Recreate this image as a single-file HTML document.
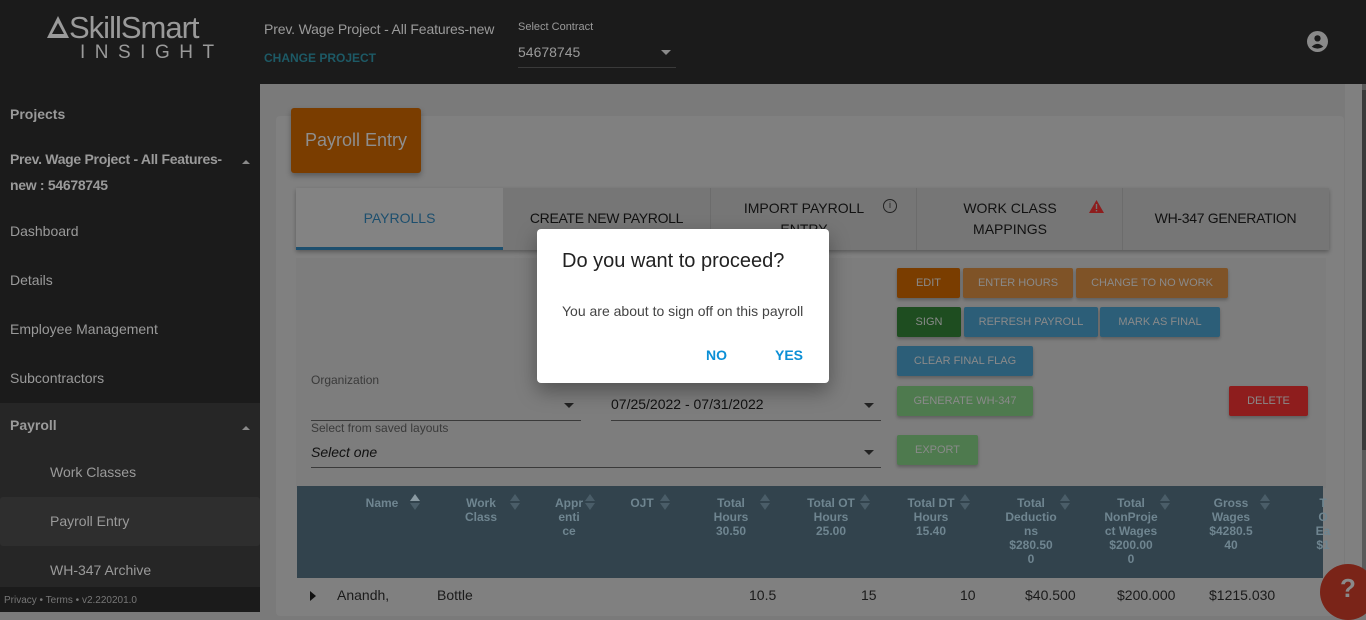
<!DOCTYPE html>
<html><head><meta charset="utf-8"><style>
*{box-sizing:border-box;margin:0;padding:0}
body{width:1366px;height:612px;overflow:hidden;background:#7a7a7a;font-family:"Liberation Sans",sans-serif;position:relative}
.top{position:absolute;left:0;top:0;width:1366px;height:84px;background:#1b1b1b}
.side{position:absolute;left:0;top:84px;width:260px;height:528px;background:#1b1b1b;color:#9a9a9a;font-size:14px}
.side div{position:absolute;left:10px}
.abs{position:absolute}
.btn{position:absolute;height:30px;border-radius:2px;font-size:11px;color:#8a8a8a;text-align:center;line-height:30px;box-shadow:0 2px 3px rgba(0,0,0,.25)}
.th{position:absolute;top:10px;color:#6f8590;font-size:12px;font-weight:bold;text-align:center;line-height:14px}
.td{position:absolute;top:587px;font-size:14px;color:#1a1a1a}
.sa{position:absolute;top:494px;width:10px;height:18px}
.sa:before{content:"";position:absolute;left:0;top:0;border-left:5px solid transparent;border-right:5px solid transparent;border-bottom:7px solid #4a5d68}
.sa:after{content:"";position:absolute;left:0;top:9px;border-left:5px solid transparent;border-right:5px solid transparent;border-top:7px solid #4a5d68}
.sa.on:before{border-bottom-color:#8a9aa2}
</style></head><body>
<div class="top">
  <svg class="abs" style="left:46px;top:15px" width="24" height="24" viewBox="0 0 24 24"><path d="M12 1 L23 23 H1 Z M12 8 L6 19 H18 Z" fill="#9a9a9a" fill-rule="evenodd"/></svg>
  <div class="abs" style="left:69px;top:10px;font-size:31px;color:#9a9a9a;letter-spacing:-1px">SkillSmart</div>
  <div class="abs" style="left:80px;top:42px;font-size:19px;color:#9a9a9a;letter-spacing:9.5px">INSIGHT</div>
  <div class="abs" style="left:264px;top:21px;font-size:14px;color:#9a9a9a;letter-spacing:-0.15px">Prev. Wage Project - All Features-new</div>
  <div class="abs" style="left:264px;top:51px;font-size:12px;color:#1d5a66;font-weight:bold">CHANGE PROJECT</div>
  <div class="abs" style="left:518px;top:21px;font-size:11px;color:#9a9a9a">Select Contract</div>
  <div class="abs" style="left:518px;top:44px;font-size:14px;color:#9a9a9a">54678745</div>
  <div class="abs" style="left:661px;top:50px;width:0;height:0;border-left:5px solid transparent;border-right:5px solid transparent;border-top:5px solid #8a8a8a"></div>
  <div class="abs" style="left:518px;top:67px;width:158px;height:1px;background:#3a3a3a"></div>
  <svg class="abs" style="left:1307px;top:31px" width="21" height="21" viewBox="0 0 20 20"><circle cx="10" cy="10" r="10" fill="#8a8a8a"/><circle cx="10" cy="7" r="3" fill="#1b1b1b"/><path d="M4.5 15 Q10 9.5 15.5 15 Q10 18.5 4.5 15Z" fill="#1b1b1b"/></svg>
</div>
<div class="side">
  <div style="top:22px;font-weight:bold">Projects</div>
  <div style="top:62px;font-weight:bold;line-height:26px;width:230px;letter-spacing:-0.3px">Prev. Wage Project - All Features-<br>new : 54678745</div>
  <div style="left:242px;top:76px;width:0;height:0;border-left:4px solid transparent;border-right:4px solid transparent;border-bottom:4px solid #8a8a8a"></div>
  <div style="top:139px">Dashboard</div>
  <div style="top:188px">Details</div>
  <div style="top:237px">Employee Management</div>
  <div style="top:286px">Subcontractors</div>
  <div style="left:0;top:319px;width:260px;height:196px;background:#262626"></div>
  <div style="top:333px;font-weight:bold">Payroll</div>
  <div style="left:242px;top:342px;width:0;height:0;border-left:4px solid transparent;border-right:4px solid transparent;border-bottom:4px solid #8a8a8a"></div>
  <div style="left:50px;top:380px">Work Classes</div>
  <div style="left:0;top:413px;width:260px;height:49px;background:#2e2e2e;border-radius:3px"></div>
  <div style="left:50px;top:429px">Payroll Entry</div>
  <div style="left:50px;top:478px">WH-347 Archive</div>
  <div style="left:0;top:503px;width:260px;height:25px;background:#1b1b1b"></div>
  <div style="left:4px;top:511px;font-size:10px;color:#777">Privacy • Terms • v2.220201.0</div>
</div>
<div class="abs" style="left:1345px;top:84px;width:17px;height:528px;background:#808080"></div>
<div class="abs" style="left:1362px;top:84px;width:4px;height:528px;background:#5a5a5a"></div>
<div class="abs" style="left:1362px;top:90px;width:4px;height:360px;background:#3a3a3a"></div>
<div class="abs" style="left:276px;top:116px;width:1068px;height:500px;background:#808080;border-radius:4px"></div>
<div class="abs" style="left:291px;top:108px;width:130px;height:65px;background:#7a3d00;border-radius:3px;color:#8e8e8e;font-size:18px;line-height:65px;text-align:center;box-shadow:0 3px 6px rgba(0,0,0,.3)">Payroll Entry</div>
<div class="abs" style="left:296px;top:188px;width:1033px;height:62px;background:#767676;box-shadow:0 2px 4px rgba(0,0,0,.3)"></div>
<div class="abs" style="left:296px;top:188px;width:207px;height:62px;background:#838383;border-bottom:3px solid #1d4f6e"></div>
<div class="abs" style="left:296px;top:210px;width:207px;text-align:center;font-size:14px;color:#1d4f6e">PAYROLLS</div>
<div class="abs" style="left:503px;top:210px;width:207px;text-align:center;font-size:14px;color:#111;letter-spacing:-0.3px">CREATE NEW PAYROLL</div>
<div class="abs" style="left:710px;top:188px;width:1px;height:62px;background:#6c6c6c"></div>
<div class="abs" style="left:720px;top:198px;width:168px;text-align:center;font-size:14px;color:#111;line-height:21px">IMPORT PAYROLL<br>ENTRY</div>
<div class="abs" style="left:883px;top:199px;width:14px;height:14px;border:1.3px solid #222;border-radius:50%;font-size:9px;text-align:center;line-height:11px;color:#222">i</div>
<div class="abs" style="left:916px;top:188px;width:1px;height:62px;background:#6c6c6c"></div>
<div class="abs" style="left:930px;top:198px;width:160px;text-align:center;font-size:14px;color:#111;line-height:21px">WORK CLASS<br>MAPPINGS</div>
<svg class="abs" style="left:1089px;top:200px" width="15" height="13" viewBox="0 0 15 13"><path d="M7.5 0 L15 13 H0Z" fill="#8e1d1d"/><rect x="6.8" y="4" width="1.4" height="5" fill="#767676"/><rect x="6.8" y="10" width="1.4" height="1.4" fill="#767676"/></svg>
<div class="abs" style="left:1122px;top:188px;width:1px;height:62px;background:#6c6c6c"></div>
<div class="abs" style="left:1122px;top:210px;width:207px;text-align:center;font-size:14px;color:#111;letter-spacing:-0.3px">WH-347 GENERATION</div>
<div class="abs" style="left:296px;top:258px;width:1030px;height:230px;background:#7d7d7d"></div>
<div class="abs" style="left:311px;top:373px;font-size:12px;color:#3a3a3a">Organization</div>
<div class="abs" style="left:311px;top:420px;width:270px;height:1px;background:#3a3a3a"></div>
<div class="abs" style="left:564px;top:403px;border-left:5px solid transparent;border-right:5px solid transparent;border-top:5px solid #222"></div>
<div class="abs" style="left:611px;top:396px;font-size:14px;color:#111">07/25/2022 - 07/31/2022</div>
<div class="abs" style="left:611px;top:420px;width:270px;height:1px;background:#3a3a3a"></div>
<div class="abs" style="left:864px;top:403px;border-left:5px solid transparent;border-right:5px solid transparent;border-top:5px solid #222"></div>
<div class="abs" style="left:311px;top:421px;font-size:12px;color:#3a3a3a">Select from saved layouts</div>
<div class="abs" style="left:311px;top:444px;font-size:14px;color:#111;font-style:italic">Select one</div>
<div class="abs" style="left:311px;top:467px;width:570px;height:1px;background:#3a3a3a"></div>
<div class="abs" style="left:864px;top:450px;border-left:5px solid transparent;border-right:5px solid transparent;border-top:5px solid #222"></div>
<div class="btn" style="left:897px;top:268px;width:63px;background:#7a3d00">EDIT</div>
<div class="btn" style="left:963px;top:268px;width:110px;background:#7f5327">ENTER HOURS</div>
<div class="btn" style="left:1076px;top:268px;width:152px;background:#7f5327">CHANGE TO NO WORK</div>
<div class="btn" style="left:897px;top:307px;width:64px;background:#1e4d20">SIGN</div>
<div class="btn" style="left:964px;top:307px;width:134px;background:#2c5e78">REFRESH PAYROLL</div>
<div class="btn" style="left:1100px;top:307px;width:120px;background:#2c5e78">MARK AS FINAL</div>
<div class="btn" style="left:897px;top:346px;width:136px;background:#2c5e78">CLEAR FINAL FLAG</div>
<div class="btn" style="left:897px;top:386px;width:136px;background:#4e7a4e">GENERATE WH-347</div>
<div class="btn" style="left:1229px;top:386px;width:79px;background:#8e1d1d">DELETE</div>
<div class="btn" style="left:897px;top:435px;width:81px;background:#4e7a4e">EXPORT</div>
<div class="abs" style="left:297px;top:486px;width:1026px;height:92px;background:#32434d"></div>
<div class="abs" style="left:297px;top:578px;width:1026px;height:34px;background:#808080"></div>
<div style="position:absolute;left:297px;top:486px;width:1026px;height:92px">
<div class="th" style="left:36px;width:98px">Name</div>
<div class="th" style="left:134px;width:100px">Work<br>Class</div>
<div class="th" style="left:256px;width:32px">Appr<br>enti<br>ce</div>
<div class="th" style="left:325px;width:40px">OJT</div>
<div class="th" style="left:404px;width:60px">Total<br>Hours<br>30.50</div>
<div class="th" style="left:504px;width:60px">Total OT<br>Hours<br>25.00</div>
<div class="th" style="left:604px;width:60px">Total DT<br>Hours<br>15.40</div>
<div class="th" style="left:704px;width:60px">Total<br>Deductio<br>ns<br>$280.50<br>0</div>
<div class="th" style="left:804px;width:60px">Total<br>NonProje<br>ct Wages<br>$200.00<br>0</div>
<div class="th" style="left:904px;width:60px">Gross<br>Wages<br>$4280.5<br>40</div>
<div class="th" style="left:996px;width:60px">T<br>O<br>Ea<br>$1</div>
</div>
<div class="sa on" style="left:410px"></div>
<div class="sa" style="left:510px"></div>
<div class="sa" style="left:585px"></div>
<div class="sa" style="left:660px"></div>
<div class="sa" style="left:760px"></div>
<div class="sa" style="left:860px"></div>
<div class="sa" style="left:960px"></div>
<div class="sa" style="left:1060px"></div>
<div class="sa" style="left:1160px"></div>
<div class="sa" style="left:1260px"></div>
<div class="abs" style="left:310px;top:591px;border-top:5px solid transparent;border-bottom:5px solid transparent;border-left:6px solid #111"></div>
<div class="td" style="left:337px">Anandh,</div>
<div class="td" style="left:437px">Bottle</div>
<div class="td" style="left:749px">10.5</div>
<div class="td" style="left:861px">15</div>
<div class="td" style="left:960px">10</div>
<div class="td" style="left:1025px">$40.500</div>
<div class="td" style="left:1117px">$200.000</div>
<div class="td" style="left:1209px">$1215.030</div>
<div class="abs" style="left:1320px;top:564px;width:56px;height:56px;border-radius:50%;background:#7a2418;color:#8a8a8a;font-size:26px;font-weight:bold;line-height:48px;padding-left:20px">?</div>
<div class="abs" style="left:537px;top:229px;width:292px;height:154px;background:#fff;border-radius:4px;box-shadow:0 8px 20px rgba(0,0,0,.35)">
  <div class="abs" style="left:25px;top:21px;font-size:20px;color:#222">Do you want to proceed?</div>
  <div class="abs" style="left:25px;top:74px;font-size:14px;color:#444">You are about to sign off on this payroll</div>
  <div class="abs" style="left:169px;top:118px;font-size:14px;color:#0b8fd6;font-weight:bold">NO</div>
  <div class="abs" style="left:238px;top:118px;font-size:14px;color:#0b8fd6;font-weight:bold">YES</div>
</div>
</body></html>
